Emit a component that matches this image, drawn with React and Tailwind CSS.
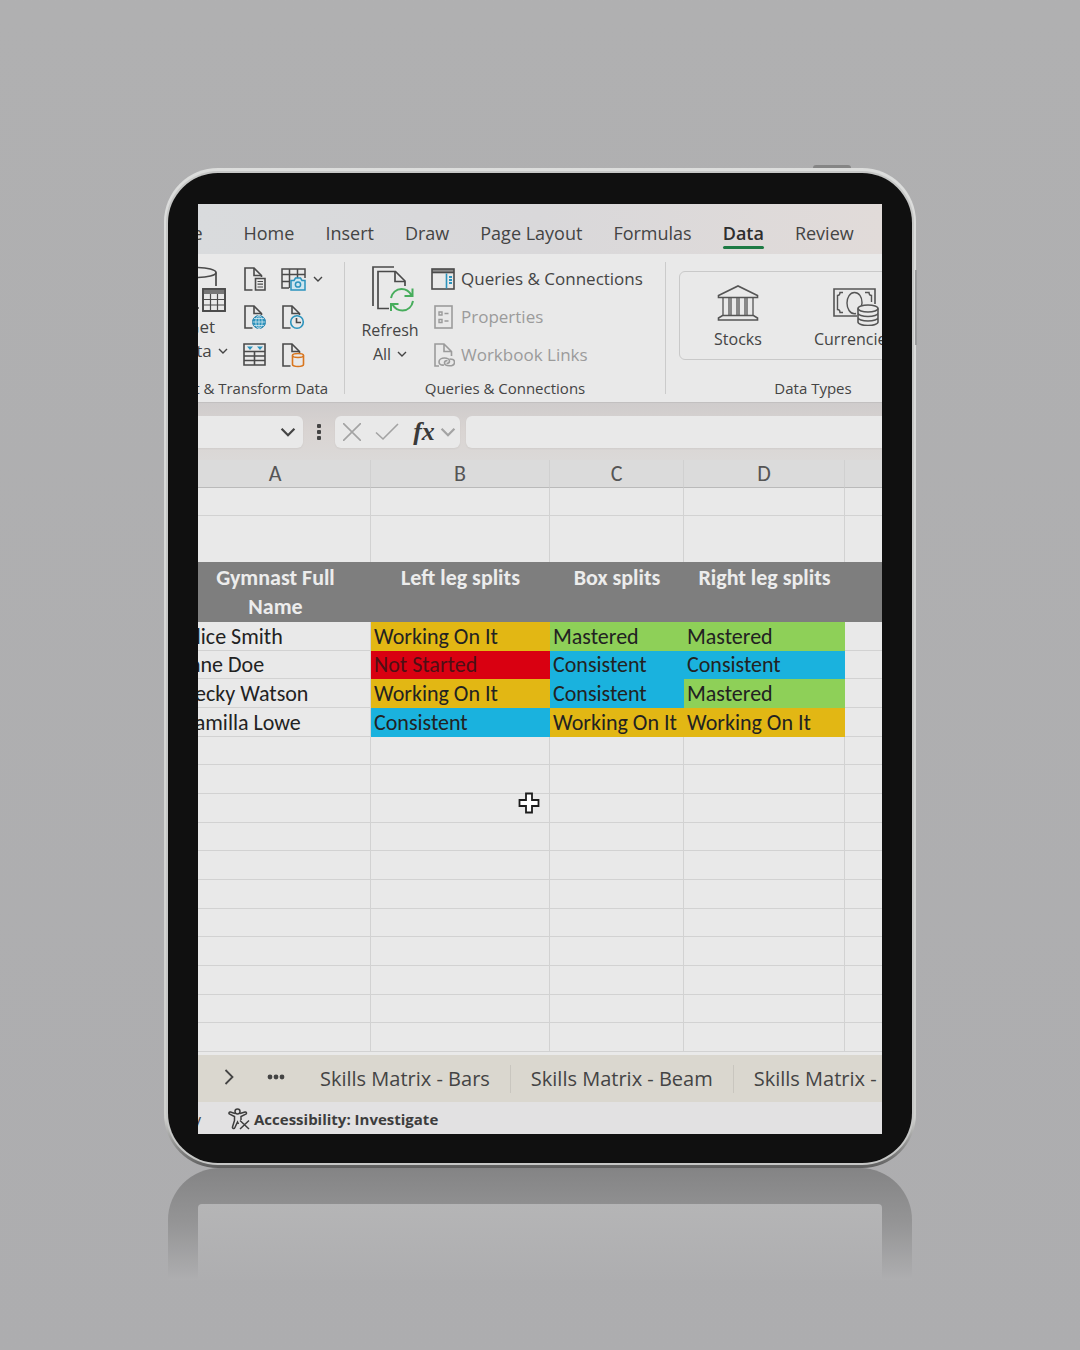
import React from 'react';

const TABS = ['Home', 'Insert', 'Draw', 'Page Layout', 'Formulas', 'Data', 'Review'];

const GYMNASTS = [
    { name: 'Alice Smith', skills: ['Working On It', 'Mastered', 'Mastered'] },
    { name: 'Jane Doe', skills: ['Not Started', 'Consistent', 'Consistent'] },
    { name: 'Becky Watson', skills: ['Working On It', 'Consistent', 'Mastered'] },
    { name: 'Camilla Lowe', skills: ['Consistent', 'Working On It', 'Working On It'] },
];

const STATUS_COLORS = {
    'Working On It': 'bg-[#e2b714] border-[#e2b714]',
    'Not Started': 'bg-[#d90011] border-[#d90011] text-[#4d1015]',
    'Consistent': 'bg-[#1ab2de] border-[#1ab2de]',
    'Mastered': 'bg-[#8ed058] border-[#8ed058]',
};

const COLUMNS = ['A', 'B', 'C', 'D', ''];
const EMPTY_ROWS = 11;

// Every third row is a pixel shorter, as in a zoomed sheet
const rowHeight = (index) => (index % 3 === 1 ? 'h-7' : 'h-[29px]');

const Chevron = ({ className }) => (
    <svg className={className} viewBox="0 0 10 6" fill="none" stroke="currentColor" strokeWidth="1.4">
        <path d="M1 1l4 4 4-4" />
    </svg>
);

// Page outline with a folded corner; the badge is passed as children
const DocIcon = ({ children }) => (
    <svg className="w-6 h-[26px]" viewBox="0 0 24 26" fill="none" stroke="#4a4a4a" strokeWidth="1.6">
        <path d="M9.5 24H2V2h9l7.5 7.5V11" />
        <path d="M11 2v7.5h7" />
        {children}
    </svg>
);

const GetDataIcon = () => (
    <svg className="w-[50px] h-[46px]" viewBox="0 0 50 46" fill="none" stroke="#4a4a4a" strokeWidth="1.7">
        <ellipse cx="21" cy="6.5" rx="19" ry="5" />
        <path d="M2 6.5V37c0 3 8 5 19 5h2M40 6.5V20" />
        <rect x="27" y="23" width="22" height="22" fill="#e9e9e9" />
        <path d="M27 25.5h22" strokeWidth="5" stroke="#777" />
        <path d="M27 33.5h22M27 39h22M34.5 28v17M41.5 28v17" strokeWidth="1.2" />
        <rect x="27" y="23" width="22" height="22" />
    </svg>
);

const PictureTableIcon = () => (
    <svg className="w-[26px] h-[26px] shrink-0" viewBox="0 0 26 26" fill="none" stroke="#4a4a4a" strokeWidth="1.5">
        <path d="M8 22H1V3h23v9M1 8.5h23M1 15.5h8M8.5 3v19M16.5 3v9" />
        <path d="M10 14.5h3l1.5-2.5h5l1.5 2.5h3v9.500H10z" stroke="#2b93bd" fill="#cfe6ef" />
        <circle cx="17" cy="18.5" r="2.6" stroke="#2b93bd" />
    </svg>
);

const TableIcon = () => (
    <svg className="w-6 h-[26px]" viewBox="0 0 24 26" fill="none" stroke="#4a4a4a" strokeWidth="1.6">
        <path d="M1 2h21v21H1zM1 9.5h21M1 14h21M1 18.5h21M11.5 9.5V23" />
        <path d="M4 4.5h6l-3 3.5zM14 4.5h6l-3 3.5z" fill="#2b93bd" stroke="none" />
    </svg>
);

const RefreshIcon = () => (
    <svg className="w-[42px] h-[46px] ml-[6px]" viewBox="0 0 42 46" fill="none" stroke="#4a4a4a" strokeWidth="1.7">
        <path d="M1 40V1h21" />
        <path d="M17 42.5H6V5.5h17.5l9.5 9.5v5" />
        <path d="M23 6v9.5h10" />
        <g stroke="#47ad5c" strokeWidth="2">
            <path d="M19 32c1-5 5-9 10.5-9 4.5 0 8 2.5 10 6.5M40.5 22.5v7.5h-8" />
            <path d="M41 35c-1 5.5-5 9.5-10.5 9.5-4.5 0-8-2.5-10-6M19 45v-7h7.5" />
        </g>
    </svg>
);

const QueriesIcon = () => (
    <svg className="w-6 h-6" viewBox="0 0 24 24" fill="none" stroke="#4a4a4a" strokeWidth="1.6">
        <path d="M1 3.5h22" stroke="#8a8a8a" strokeWidth="3" />
        <rect x="1" y="2" width="22" height="20" />
        <path d="M1 5.5h22" />
        <path d="M15.5 6.5v15" stroke="#2b93bd" />
        <path d="M18 10h3M18 13h3M18 16h3" stroke="#2b93bd" strokeWidth="1.8" />
    </svg>
);

const PropertiesIcon = () => (
    <svg className="w-6 h-6" viewBox="0 0 24 24" fill="none" stroke="#9b9b9b" strokeWidth="1.6">
        <rect x="4" y="1" width="17" height="22" />
        <path d="M8 7h3v3H8zM8 14.5h3v3H8zM13.5 8.5h4M13.5 16h4" strokeWidth="1.4" />
    </svg>
);

const LinksIcon = () => (
    <svg className="w-6 h-6" viewBox="0 0 24 24" fill="none" stroke="#9b9b9b" strokeWidth="1.6">
        <path d="M8 23H4V1h9l7.5 7.5V13M13 1v7.5h7" />
        <path d="M13 22c-2.5.5-5-.5-5-3s2.5-4 5.5-4 5 1.5 5 3-1 2.5-3 2.5" />
        <path d="M18.5 16c2.5 0 5 1 5 3.2s-2 3.6-5 3.6-5-1.3-5-3 1-2.3 3-2.3" />
    </svg>
);

const StocksIcon = () => (
    <svg className="w-[42px] h-9" viewBox="0 0 42 36" fill="none" stroke="#555" strokeWidth="1.6">
        <path d="M1.5 12.5v-2L21 1l19.5 9.5v2zM1.5 35v-2l4-2.5h31l4 2.5v2z" />
        <path d="M6 12.5v18M12 12.5v18M14 12.5v18M20 12.5v18M22 12.5v18M28 12.5v18M30 12.5v18M36 12.5v18" strokeWidth="1.3" />
    </svg>
);

const CurrenciesIcon = () => (
    <svg className="w-[46px] h-[38px] ml-1" viewBox="0 0 46 38" fill="none" stroke="#555" strokeWidth="1.6">
        <path d="M24 28H1V1h41v15" />
        <path d="M10 4.5H7c0 2-1 3-2.5 3V21.5c1.5 0 2.5 1 2.5 3h3M32 4.5h4c0 2 1 3 2.5 3V14" strokeWidth="1.4" />
        <path d="M23 25.5c-.5.2-1 .2-1.5.2-4.5 0-7.5-5-7.5-10.7S17 4.5 21.5 4.5 29 9 29 14.5c0 1-.2 2-.5 3" strokeWidth="1.4" />
        <ellipse cx="35" cy="20.5" rx="10" ry="3.5" fill="#e9e9e9" />
        <path d="M25 20.5V34c0 2 4.5 3.5 10 3.5S45 36 45 34V20.5M25 25c0 2 4.5 3.5 10 3.5S45 27 45 25M25 29.5c0 2 4.5 3.5 10 3.5s10-1.5 10-3.5" />
    </svg>
);

const AccessibilityIcon = () => (
    <svg className="w-[22px] h-[22px]" viewBox="0 0 22 22" fill="none" stroke="#3d3d3d" strokeWidth="1.5">
        <circle cx="9.5" cy="3.5" r="2.5" />
        <path d="M12 5.5l5-1.5c1.5-.3 2 1.5.8 2.2L13 8.500v3.500M7 5.5L2.500 4C1 3.700.3 5.500 1.700 6.200L6.500 8.500v4L4.500 19c-.3 1.500 1.700 2.200 2.300.8L9.500 14l1 2" />
        <path d="M12 12.5l9 8.500M21 12.5L12 21" />
    </svg>
);

const SheetCursor = () => (
    <svg className="absolute left-[320px] top-[588px] w-[22px] h-[22px]" viewBox="0 0 22 22">
        <path d="M8 1.5h6v6.5h6.5v6H14v6.500H8V14H1.5V8H8z" fill="#fff" stroke="#1c1c1c" strokeWidth="1.8" />
    </svg>
);

const TabBar = () => (
    <nav className="h-[50px] flex items-center gap-[31px] pt-2 whitespace-nowrap bg-linear-to-r from-[#d9dbdd] via-[#d9d8da] to-[#e1dbd9] text-lg leading-[26px] text-[#444]">
        <button className="-ml-6 mr-[10px]">File</button>
        {TABS.map((tab) => (
            <button
                key={tab}
                className={tab === 'Data' ? 'relative font-semibold text-[#2e2e2e] after:absolute after:inset-x-0 after:-bottom-[3px] after:h-[3px] after:rounded-full after:bg-[#1e7b45]' : ''}
            >
                {tab}
            </button>
        ))}
    </nav>
);

const RibbonGroup = ({ label, className, labelClass = '', children }) => (
    <section className={`shrink-0 flex flex-col pt-1.5 ${className}`}>
        <div className="h-[114px] flex">{children}</div>
        <h2 className={`h-7 text-[15px] leading-7 text-center ${labelClass}`}>{label}</h2>
    </section>
);

const Divider = () => <div className="w-px shrink-0 my-2 bg-[#cbcbcb]" />;

const Ribbon = () => (
    <div className="h-[149px] flex whitespace-nowrap bg-[#e9e9e9] border-b border-[#c2c0c0] text-[17px] leading-6 text-[#444]">
        <RibbonGroup label="Get & Transform Data" className="w-[171px] -ml-[25px]" labelClass="pr-[14px]">
            <button className="w-14 mr-[14px] flex flex-col items-center pt-[6px]">
                <GetDataIcon />
                <span className="mt-[3px]">Get</span>
                <span className="flex items-center gap-1.5">Data <Chevron className="w-2.5 h-1.5" /></span>
            </button>
            <div className="grid grid-cols-[24px_26px] grid-rows-3 gap-x-[14px] items-center">
                <button aria-label="From text">
                    <DocIcon>
                        <path d="M12.5 12.5H22V24h-9.5z" fill="#e9e9e9" />
                        <path d="M14.5 15.5H20M14.5 18.2H20M14.5 21H20" strokeWidth="1.2" />
                    </DocIcon>
                </button>
                <button aria-label="From picture" className="flex items-center gap-1.5">
                    <PictureTableIcon />
                    <Chevron className="w-2.5 h-1.5 shrink-0" />
                </button>
                <button aria-label="From web">
                    <DocIcon>
                        <circle cx="16" cy="18" r="6.5" fill="#2b93bd" stroke="#2b83ad" strokeWidth="1" />
                        <path d="M9.5 18h13M16 11.5v13M11 14.5h10M11 21.5h10" stroke="#d5e8f0" strokeWidth=".8" />
                        <ellipse cx="16" cy="18" rx="3.2" ry="6.5" stroke="#d5e8f0" strokeWidth=".8" />
                    </DocIcon>
                </button>
                <button aria-label="Recent sources">
                    <DocIcon>
                        <circle cx="16" cy="18" r="6.3" fill="#e9e9e9" stroke="#2b93bd" />
                        <path d="M15.5 14v4.5H20" />
                    </DocIcon>
                </button>
                <button aria-label="From table"><TableIcon /></button>
                <button aria-label="Existing connections">
                    <DocIcon>
                        <path d="M11.5 13.5v9c0 1 2.5 2 5.5 2s5.5-1 5.5-2v-9" fill="#e9e9e9" stroke="#d9761e" />
                        <ellipse cx="17" cy="13.5" rx="5.5" ry="2" fill="#e9e9e9" stroke="#d9761e" />
                    </DocIcon>
                </button>
            </div>
        </RibbonGroup>
        <Divider />
        <RibbonGroup label="Queries & Connections" className="w-[320px]">
            <button className="w-[60px] ml-[15px] mr-[11px] flex flex-col items-center pt-[6px] text-base">
                <RefreshIcon />
                <span className="mt-[6px]">Refresh</span>
                <span className="flex items-center gap-1.5">All <Chevron className="w-2.5 h-1.5" /></span>
            </button>
            <div className="grid grid-rows-3 items-center">
                <button className="flex items-center gap-1.5"><QueriesIcon />Queries &amp; Connections</button>
                <button className="flex items-center gap-1.5 text-[#9b9b9b]"><PropertiesIcon />Properties</button>
                <button className="flex items-center gap-1.5 text-[#9b9b9b]"><LinksIcon />Workbook Links</button>
            </div>
        </RibbonGroup>
        <Divider />
        <RibbonGroup label="Data Types" className="w-[294px]">
            <div className="w-[268px] h-[89px] mx-[13px] mt-[11px] flex rounded-md border border-[#c9c9c9] text-base leading-6">
                <button className="w-[116px] flex flex-col items-center pt-[13px]">
                    <StocksIcon />
                    <span className="mt-[6px]">Stocks</span>
                </button>
                <button className="w-[116px] flex flex-col items-center pt-4">
                    <CurrenciesIcon />
                    <span className="mt-px">Currencies</span>
                </button>
            </div>
        </RibbonGroup>
    </div>
);

const FormulaBar = () => (
    <div className="h-[57px] flex items-center bg-linear-to-b from-[#cfcccc] via-[#d9d4d2] to-[#dbd9d8] text-[#444]">
        <div className="h-8 w-[105px] shrink-0 flex items-center rounded-r-md bg-[#e9e9e9] shadow-xs">
            <input aria-label="Name box" className="w-[82px] h-8 outline-none" />
            <button aria-label="Show names"><Chevron className="w-4 h-2.5" /></button>
        </div>
        <svg className="w-1.5 h-[18px] mx-[13px] shrink-0" viewBox="0 0 6 18" fill="#444">
            <rect x="1" y="1" width="4" height="4" rx="1" />
            <rect x="1" y="7" width="4" height="4" rx="1" />
            <rect x="1" y="13" width="4" height="4" rx="1" />
        </svg>
        <div className="h-8 w-[125px] shrink-0 flex items-center rounded-md bg-[#e9e9e9] shadow-xs text-[#a3a3a3]">
            <button aria-label="Cancel" className="ml-2">
                <svg className="w-[18px] h-[18px]" viewBox="0 0 18 18" stroke="currentColor" strokeWidth="1.6"><path d="M0 0l18 18M18 0L0 18" /></svg>
            </button>
            <button aria-label="Enter" className="ml-[14px]">
                <svg className="w-6 h-[18px]" viewBox="0 0 24 18" fill="none" stroke="currentColor" strokeWidth="1.6"><path d="M1 9.5l7 6.5L23 1" /></svg>
            </button>
            <button className="w-6 ml-[13px] font-['Liberation_Serif',serif] font-bold italic text-[26px] leading-7 text-[#3a3a3a]">fx</button>
            <Chevron className="w-4 h-2.5 ml-1" />
        </div>
        <input aria-label="Formula" className="h-8 ml-1.5 min-w-0 flex-1 rounded-l-md bg-[#e9e9e9] shadow-xs outline-none" />
    </div>
);

const cell = 'border-r border-b border-[#d2d2d2] last:border-r-0 p-0 pl-[3px] whitespace-nowrap';

const Sheet = () => (
    <div className="-ml-[18px] pb-[3px] bg-[#e9e9e9] font-[Carlito,Lato,sans-serif] text-[22px] leading-[27px] text-[#222]">
        <table className="w-full table-fixed border-separate border-spacing-0">
            <colgroup>
                <col className="w-[191px]" />
                <col className="w-[179px]" />
                <col className="w-[134px]" />
                <col className="w-[161px]" />
                <col />
            </colgroup>
            <thead>
                <tr className="h-7 bg-[#dbdbdb] text-[#555]">
                    {COLUMNS.map((letter) => (
                        <th key={letter} className="p-0 font-normal border-b border-r border-b-[#bababa] border-r-[#d0d0d0] last:border-r-0">{letter}</th>
                    ))}
                </tr>
            </thead>
            <tbody>
                <tr className="h-7">{COLUMNS.map((c) => <td key={c} className={cell} />)}</tr>
                <tr className="h-[46px]">{COLUMNS.map((c) => <td key={c} className="p-0 border-r border-[#d2d2d2] last:border-r-0" />)}</tr>
                <tr className="h-[60px] align-top bg-[#7e7e7e] text-[#ececec] leading-[29px]">
                    <th className="p-0 px-5 pt-px">Gymnast Full Name</th>
                    <th className="p-0 pt-px">Left leg splits</th>
                    <th className="p-0 pt-px">Box splits</th>
                    <th className="p-0 pt-px">Right leg splits</th>
                    <th className="p-0" />
                </tr>
                {GYMNASTS.map((gymnast, i) => (
                    <tr key={gymnast.name} className={rowHeight(i)}>
                        <td className={cell}>{gymnast.name}</td>
                        {gymnast.skills.map((status, j) => (
                            <td key={j} className={`border-r border-b p-0 pl-[3px] whitespace-nowrap ${STATUS_COLORS[status]}`}>{status}</td>
                        ))}
                        <td className={cell} />
                    </tr>
                ))}
                {Array.from({ length: EMPTY_ROWS }, (_, i) => (
                    <tr key={i} className={rowHeight(i + GYMNASTS.length)}>
                        {COLUMNS.map((c) => <td key={c} className={cell} />)}
                    </tr>
                ))}
            </tbody>
        </table>
    </div>
);

const SheetTabs = () => (
    <div className="h-[47px] flex items-center whitespace-nowrap bg-[#dad7cf] text-xl leading-7 text-[#444]">
        <button aria-label="Next sheets" className="ml-[26px] mr-[33px] pb-1">
            <svg className="w-2.5 h-4" viewBox="0 0 10 16" fill="none" stroke="#444" strokeWidth="1.8"><path d="M1.5 1l7 7-7 7" /></svg>
        </button>
        <button aria-label="More sheets" className="pb-1">
            <svg className="w-[18px] h-1.5" viewBox="0 0 18 6" fill="#444"><circle cx="3" cy="3" r="2.4" /><circle cx="9" cy="3" r="2.4" /><circle cx="15" cy="3" r="2.4" /></svg>
        </button>
        <button className="ml-[15px] px-5 h-7 border-r border-[#c9c6bf]">Skills Matrix - Bars</button>
        <button className="px-5 h-7 border-r border-[#c9c6bf]">Skills Matrix - Beam</button>
        <button className="px-5">Skills Matrix -</button>
    </div>
);

const StatusBar = () => (
    <div className="h-8 flex items-center pt-0.5 bg-[#e2e1e2] text-[15px] leading-5 text-[#3d3d3d]">
        <span className="w-[45px] -ml-[42px] mr-[27px] text-right">Ready</span>
        <button className="flex items-center gap-1 font-bold"><AccessibilityIcon />Accessibility: Investigate</button>
    </div>
);

const Reflection = () => (
    <div className="w-full max-w-[752px] px-1">
        <div className="h-28 px-[30px] pt-9 rounded-t-[52px] bg-linear-to-b from-[#848485] via-[#959596] to-[#aeaeb0]">
            <div className="h-full rounded-t-sm bg-linear-to-b from-[#b5b5b6] to-[#aeaeb0]" />
        </div>
    </div>
);

export default function App() {
    return (
        <div className="min-h-screen flex flex-col items-center pt-[168px] bg-linear-to-b from-[#b0b0b1] to-[#adadaf] font-['Open_Sans','Noto_Sans',sans-serif]">
            <div className="relative z-10 w-full max-w-[752px] px-1 py-[5px] rounded-[54px] bg-linear-to-b from-[#dcdddc] via-[#cfd0ce] via-95% to-[#5e5e5e]">
                <div className="absolute right-[65px] -top-[3px] w-[38px] h-[3px] rounded-t-sm bg-[#858585]" />
                <div className="absolute -right-px top-[102px] w-0.5 h-[75px] bg-[#9a9b9c]" />
                <div className="px-[30px] pt-[31px] pb-[29px] rounded-[50px] bg-[#101010] ring-2 ring-[#c6c7c6]">
                    <main className="relative overflow-hidden">
                        <TabBar />
                        <Ribbon />
                        <FormulaBar />
                        <Sheet />
                        <SheetTabs />
                        <StatusBar />
                        <SheetCursor />
                    </main>
                </div>
            </div>
            <Reflection />
        </div>
    );
}
